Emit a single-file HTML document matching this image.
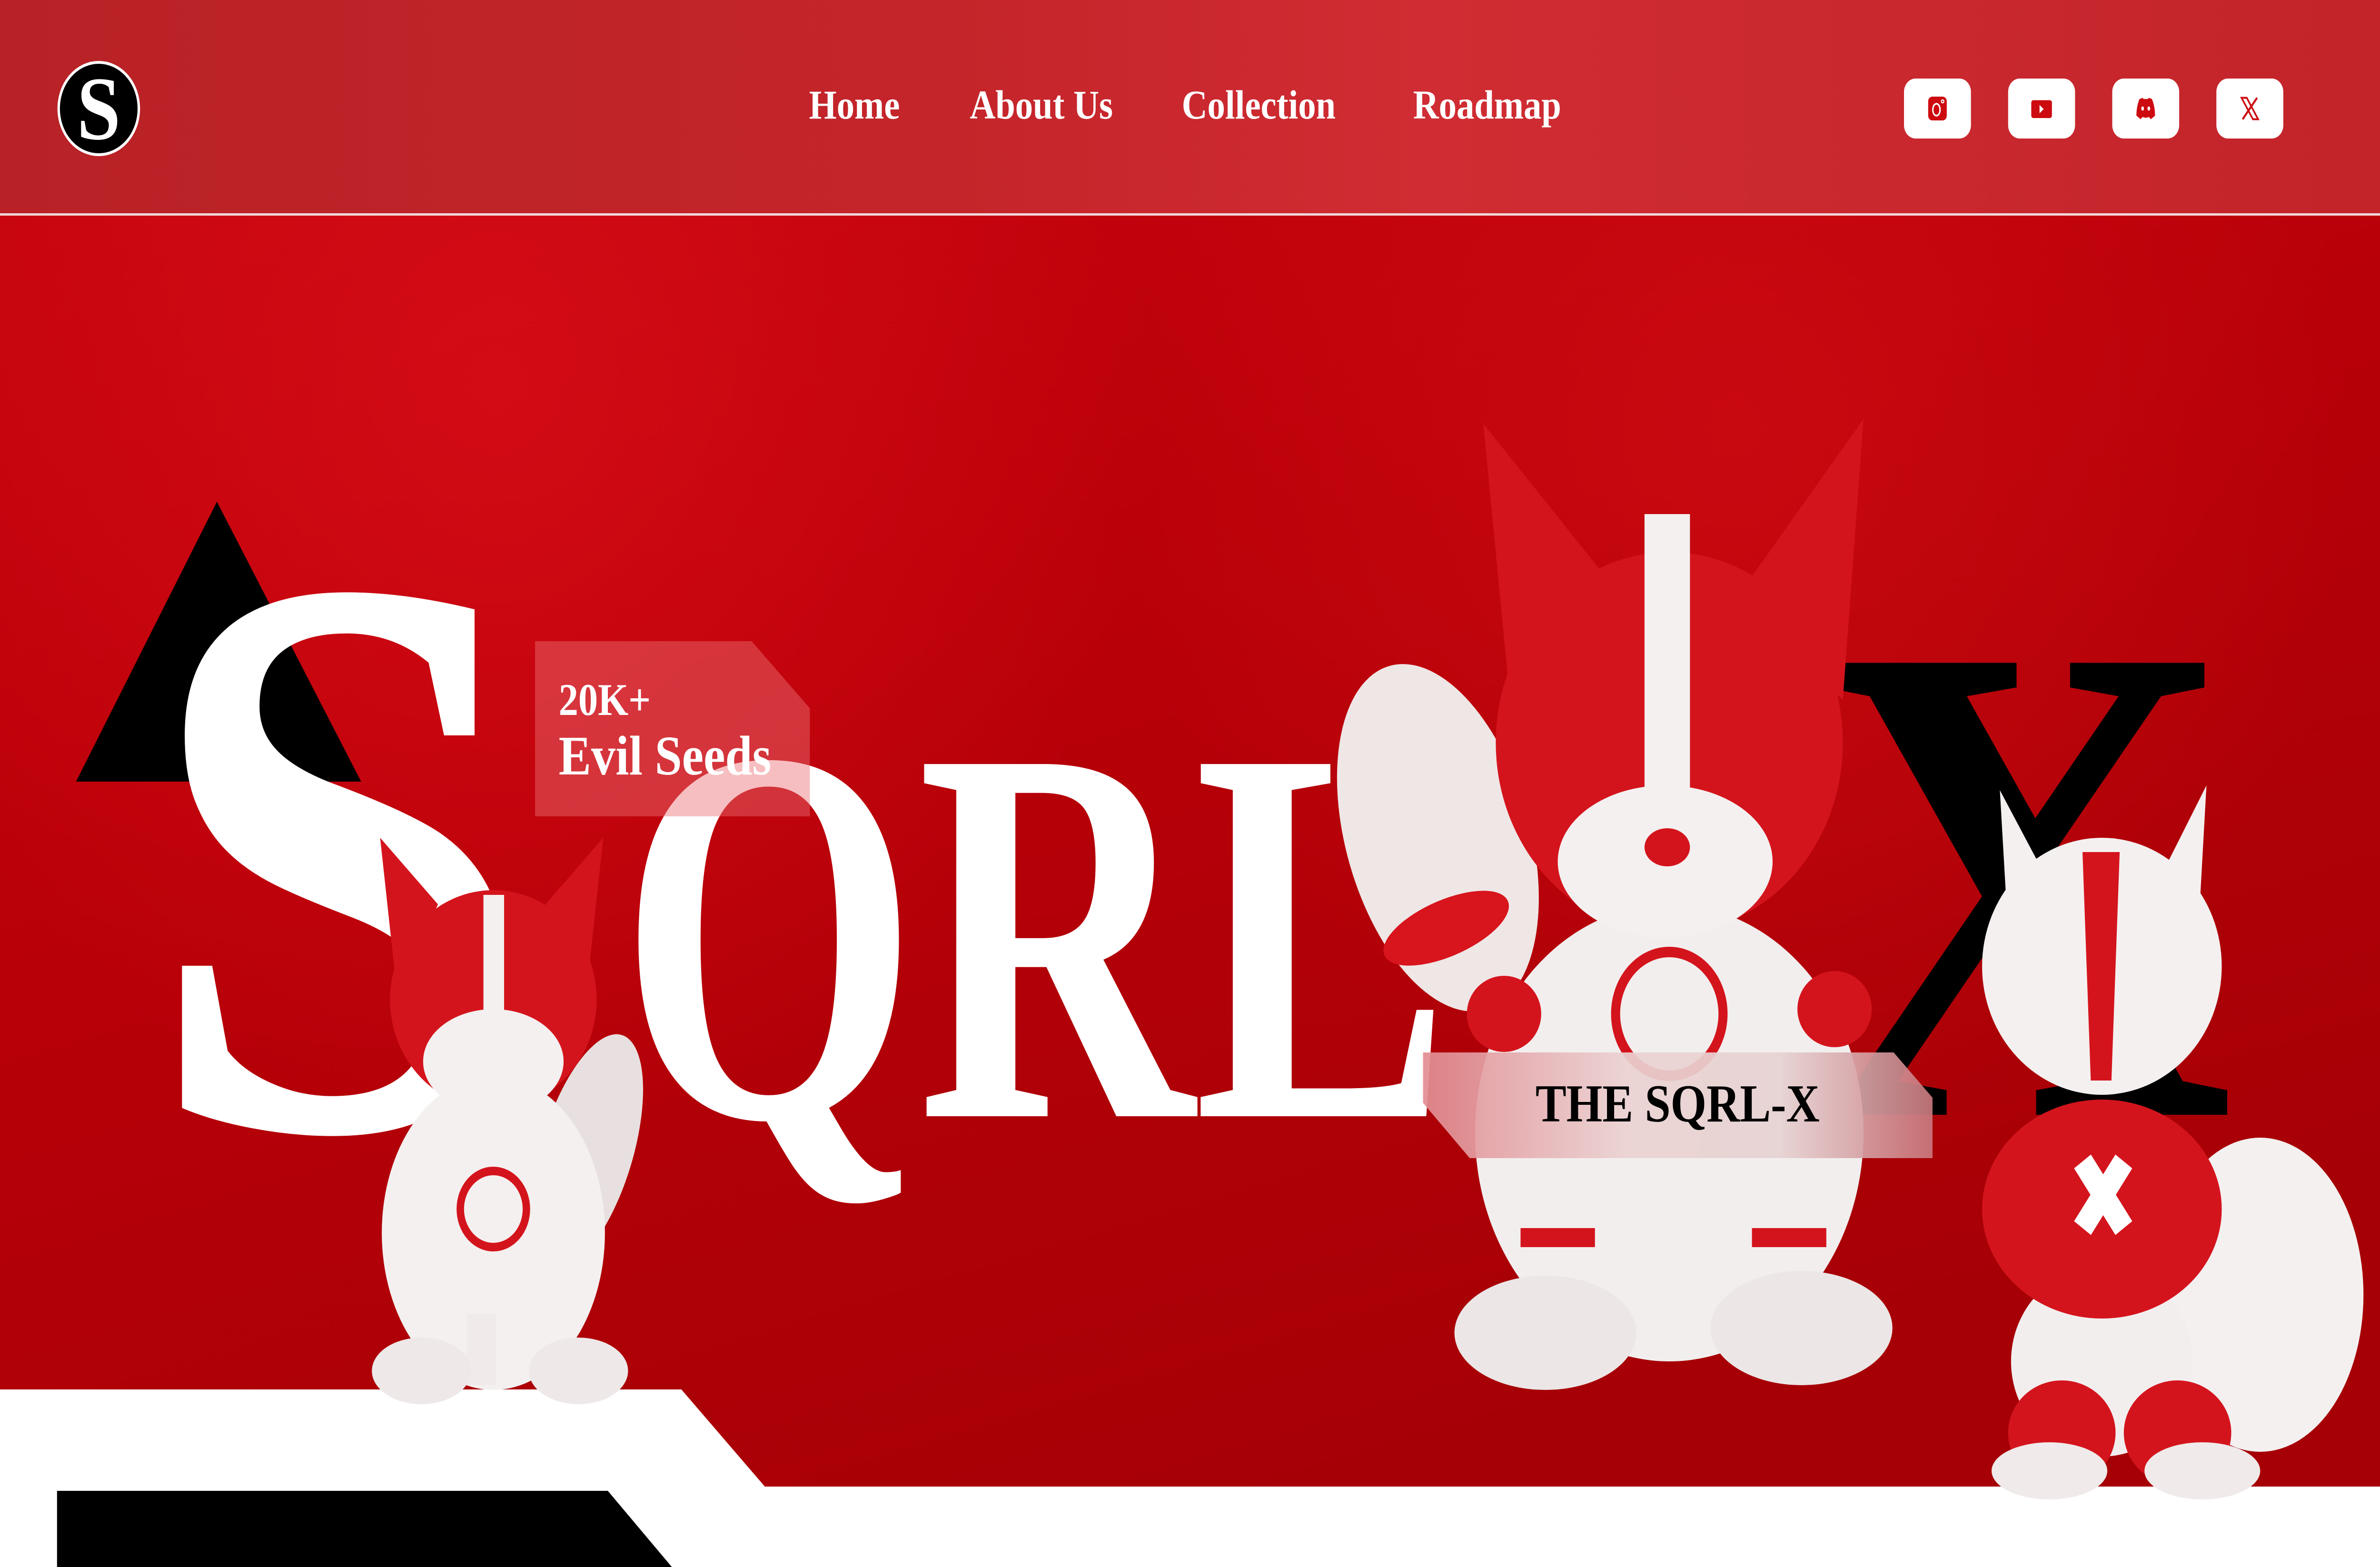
<!DOCTYPE html>
<html><head><meta charset="utf-8"><style>
html,body{margin:0;padding:0;width:100%;height:100%;overflow:hidden;background:#b80008;}
svg.page{display:block;position:fixed;left:0;top:0;width:100vw;height:100vh;}
text{font-family:"Liberation Serif",serif;font-weight:bold;}
</style></head><body>
<svg class="page" viewBox="0 0 5760 3292" preserveAspectRatio="none" xmlns="http://www.w3.org/2000/svg">
<defs>
<linearGradient id="bgl" x1="0" y1="0" x2="0.45" y2="1"><stop offset="0" stop-color="#c80610"/><stop offset=".45" stop-color="#bb0009"/><stop offset="1" stop-color="#a60006"/></linearGradient>
<radialGradient id="r1" cx="1200" cy="800" r="1600" gradientUnits="userSpaceOnUse"><stop offset="0" stop-color="#e6141e" stop-opacity=".5"/><stop offset="1" stop-color="#e6141e" stop-opacity="0"/></radialGradient>
<radialGradient id="r2" cx="4200" cy="900" r="1500" gradientUnits="userSpaceOnUse"><stop offset="0" stop-color="#dc1419" stop-opacity=".45"/><stop offset="1" stop-color="#dc1419" stop-opacity="0"/></radialGradient>
<linearGradient id="hg" x1="0" y1="0" x2="1" y2="0"><stop offset="0" stop-color="#b82226"/><stop offset=".4" stop-color="#c4252a"/><stop offset=".6" stop-color="#d02c33"/><stop offset="1" stop-color="#c2242a"/></linearGradient>
<linearGradient id="bx" x1="0" y1="0" x2="1" y2="0"><stop offset="0" stop-color="#e18c91"/><stop offset=".4" stop-color="#ebd2d2"/><stop offset=".7" stop-color="#e6d2d2"/><stop offset="1" stop-color="#c8787d"/></linearGradient>
</defs>
<rect width="5760" height="3292" fill="url(#bgl)"/>
<rect width="5760" height="3292" fill="url(#r1)"/>
<rect width="5760" height="3292" fill="url(#r2)"/>
<rect width="5760" height="448" fill="url(#hg)"/>
<rect y="448" width="5760" height="5" fill="#f2d8d8"/>

<circle cx="239" cy="228" r="97" fill="#000" stroke="#fff" stroke-width="6"/>
<text x="239" y="292" font-size="190" fill="#fff" text-anchor="middle">S</text>

<text x="1958" y="249" font-size="86" fill="#fff">Home</text>
<text x="2347" y="249" font-size="86" fill="#fff">About Us</text>
<text x="2860" y="249" font-size="86" fill="#fff">Collection</text>
<text x="3420" y="249" font-size="86" fill="#fff">Roadmap</text>

<rect x="4608" y="165" width="162" height="126" rx="28" fill="#fff"/>
<svg x="4659" y="198" width="60" height="60" viewBox="0 0 24 24"><rect x="3" y="2" width="18" height="20" rx="4" fill="#cc0a10"/><ellipse cx="11" cy="13" rx="3.5" ry="5" fill="none" stroke="#fff" stroke-width="1.4"/><circle cx="17" cy="6" r="1.2" fill="none" stroke="#fff" stroke-width="1"/></svg>
<rect x="4860" y="165" width="162" height="126" rx="28" fill="#fff"/>
<svg x="4911" y="198" width="60" height="60" viewBox="0 0 24 24"><rect x="2" y="5" width="20" height="15" rx="2" fill="#cc0a10"/><path d="M10 9l4 3.5-4 3.5z" fill="#fff"/></svg>
<rect x="5112" y="165" width="162" height="126" rx="28" fill="#fff"/>
<svg x="5163" y="198" width="60" height="60" viewBox="0 0 24 24"><path d="M6 4l3-1 1 1h4l1-1 3 1c2 4 3 9 3 14l-4 3-2-2c-2 1-4 1-6 0l-2 2-4-3c0-5 1-10 3-14z" fill="#cc0a10"/><ellipse cx="9" cy="12" rx="1.3" ry="1.8" fill="#fff"/><ellipse cx="15" cy="12" rx="1.3" ry="1.8" fill="#fff"/></svg>
<rect x="5364" y="165" width="162" height="126" rx="28" fill="#fff"/>
<svg x="5415" y="198" width="60" height="60" viewBox="0 0 24 24"><path d="M4 3h5l11 18h-5z" fill="none" stroke="#cc0a10" stroke-width="1.6"/><path d="M19 3L5 21" stroke="#cc0a10" stroke-width="1.8"/></svg>

<polygon points="525,1054 184,1642 874,1642" fill="#000"/>
<polygon points="0,2919 1649,2919 1851,3123 5760,3123 5760,3292 0,3292" fill="#fff"/>
<polygon points="138,3132 1471,3132 1626,3292 138,3292" fill="#000"/>

<text x="350" y="2370" font-size="1700" fill="#fff">S</text>
<text transform="translate(1500,2345) scale(0.82,1)" font-size="1130" fill="#fff">QRL</text>
<text x="4360" y="2342" font-size="1450" fill="#000">X</text>

<ellipse cx="1420" cy="2420" rx="110" ry="260" fill="#e8e0e0" transform="rotate(20 1420 2420)"/>
<polygon points="920,1760 1060,1900 960,2080" fill="#d4141c"/>
<polygon points="1460,1760 1320,1900 1420,2080" fill="#d4141c"/>
<ellipse cx="1194" cy="2590" rx="270" ry="330" fill="#f4f0f0"/>
<rect x="1130" y="2760" width="70" height="150" fill="#f0eaea"/>
<ellipse cx="1020" cy="2880" rx="120" ry="70" fill="#eee8e8"/>
<ellipse cx="1400" cy="2880" rx="120" ry="70" fill="#eee8e8"/>
<circle cx="1194" cy="2540" r="80" fill="none" stroke="#d4141c" stroke-width="18"/>
<ellipse cx="1194" cy="2100" rx="250" ry="230" fill="#d4141c"/>
<ellipse cx="1194" cy="2230" rx="170" ry="110" fill="#f4f0f0"/>
<rect x="1170" y="1880" width="50" height="300" fill="#f4f0f0"/>

<ellipse cx="3480" cy="1760" rx="220" ry="380" fill="#efe6e6" transform="rotate(-20 3480 1760)"/>
<ellipse cx="3500" cy="1950" rx="160" ry="60" fill="#d8141c" transform="rotate(-20 3500 1950)"/>
<polygon points="3590,890 3930,1260 3660,1520" fill="#d4141c"/>
<polygon points="4510,880 4200,1260 4460,1470" fill="#d4141c"/>
<ellipse cx="4040" cy="2380" rx="470" ry="480" fill="#f2eeee"/>
<ellipse cx="3740" cy="2800" rx="220" ry="120" fill="#ece6e6"/>
<ellipse cx="4360" cy="2790" rx="220" ry="120" fill="#ece6e6"/>
<rect x="3680" y="2580" width="180" height="40" fill="#d4141c"/>
<rect x="4240" y="2580" width="180" height="40" fill="#d4141c"/>
<circle cx="4040" cy="2130" r="130" fill="none" stroke="#d4141c" stroke-width="22"/>
<ellipse cx="3640" cy="2130" rx="90" ry="80" fill="#d4141c"/>
<ellipse cx="4440" cy="2120" rx="90" ry="80" fill="#d4141c"/>
<ellipse cx="4040" cy="1560" rx="420" ry="400" fill="#d4141c"/>
<ellipse cx="4030" cy="1810" rx="260" ry="160" fill="#f4f0f0"/>
<rect x="3980" y="1080" width="110" height="640" fill="#f4f0f0"/>
<ellipse cx="4035" cy="1780" rx="55" ry="40" fill="#d4141c"/>

<ellipse cx="5470" cy="2720" rx="250" ry="330" fill="#f4f0f0"/>
<polygon points="4840,1660 4950,1840 4860,1960" fill="#f4f0f0"/>
<polygon points="5340,1650 5230,1840 5320,1960" fill="#f4f0f0"/>
<ellipse cx="5087" cy="2860" rx="220" ry="200" fill="#f2eeee"/>
<ellipse cx="4990" cy="3010" rx="130" ry="110" fill="#d4141c"/>
<ellipse cx="5270" cy="3010" rx="130" ry="110" fill="#d4141c"/>
<ellipse cx="4960" cy="3090" rx="140" ry="60" fill="#f0eaea"/>
<ellipse cx="5330" cy="3090" rx="140" ry="60" fill="#f0eaea"/>
<ellipse cx="5087" cy="2540" rx="290" ry="230" fill="#d4141c"/>
<path d="M5040 2440l100 140M5140 2440l-100 140" stroke="#fff" stroke-width="50"/>
<ellipse cx="5087" cy="2030" rx="290" ry="270" fill="#f4f0f0"/>
<path d="M5040 1790h90l-20 480h-50z" fill="#d4141c"/>

<polygon points="1295,1347 1819,1347 1960,1488 1960,1715 1295,1715" fill="#eb6e73" fill-opacity=".45"/>
<text x="1352" y="1502" font-size="95" fill="#fff">20K+</text>
<text x="1352" y="1627" font-size="118" fill="#fff">Evil Seeds</text>

<polygon points="3444,2211 4583,2211 4677,2306 4677,2433 3557,2433 3444,2317" fill="url(#bx)" fill-opacity=".92"/>
<text x="4060" y="2356" font-size="112" fill="#000" text-anchor="middle">THE SQRL-X</text>
</svg>
</body></html>
